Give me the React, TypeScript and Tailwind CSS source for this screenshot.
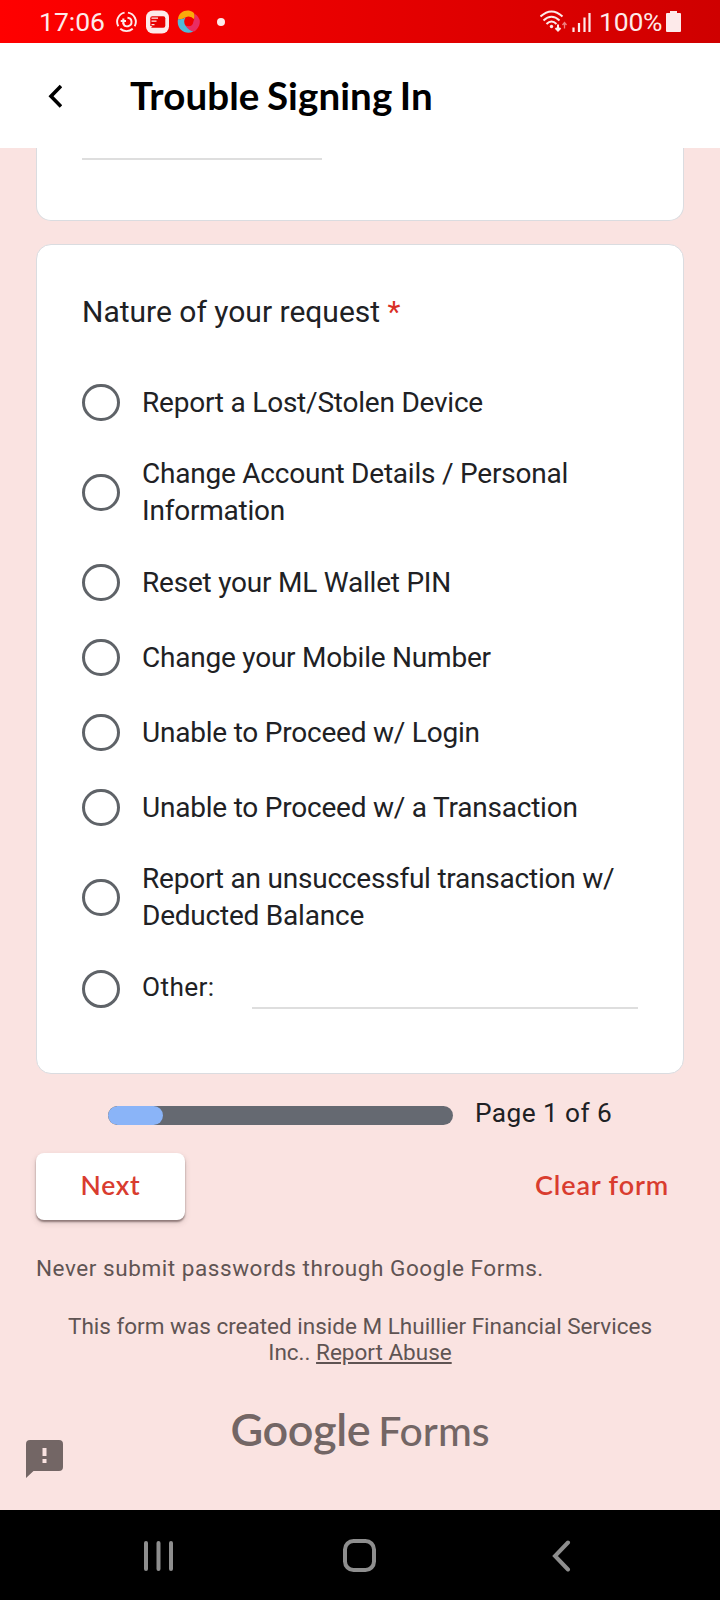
import React from 'react';

const options = [
  { label: 'Report a Lost/Stolen Device', box: 'h-[75px]' },
  { label: 'Change Account Details / Personal Information', box: 'h-[105px]', text: 'mb-[2px]' },
  { label: 'Reset your ML Wallet PIN', box: 'h-[75px]' },
  { label: 'Change your Mobile Number', box: 'h-[75px]' },
  { label: 'Unable to Proceed w/ Login', box: 'h-[75px]' },
  { label: 'Unable to Proceed w/ a Transaction', box: 'h-[75px]' },
  { label: 'Report an unsuccessful transaction w/ Deducted Balance', box: 'h-[105px]', text: 'mb-[2px]' },
];

function Radio() {
  return <span className="h-[37.5px] w-[38px] shrink-0 rounded-full border-[3px] border-[#5f6368]" />;
}

function StatusBar() {
  return (
    <div className="flex h-[43px] shrink-0 items-center bg-linear-to-r from-[#ff0000] to-[#cf0000] pl-[39px] pr-[39px] text-[26.5px] text-[#fdeaea]">
      <span className="w-[68px] whitespace-nowrap leading-[43px]">17:06</span>
      <svg className="ml-[8px] h-[24px] w-[23px]" viewBox="0 0 24 24" fill="none" stroke="#fdeaea" strokeWidth="2">
        <path d="M10 2.200A9.700 9.700 0 0 0 3.500 16.500" />
        <path d="M13.500 2.200A9.700 9.700 0 0 1 20.500 16.500" />
        <path d="M5.500 19A9.700 9.700 0 0 0 18.500 19" />
        <path d="M13 7.500A4.500 4.500 0 1 1 8.500 13.500" />
        <path d="M6 11H11.500M8.700 8.300V14" strokeWidth="2.200" />
      </svg>
      <svg className="ml-[8px] h-[24px] w-[23px]" viewBox="0 0 23 24">
        <rect y="0.500" width="23" height="23" rx="7" fill="#fdeaea" />
        <rect x="4.300" y="6.200" width="15" height="11.500" rx="2" fill="#e80000" />
        <path d="M5.500 8.200H12M5.500 11.200H10.500M5.500 14.700H8.500" stroke="#fdeaea" strokeWidth="1.300" />
        <path d="M4 18V16H6.500Z" fill="#fdeaea" />
      </svg>
      <svg className="ml-[8px] h-[24px] w-[23px]" viewBox="0 0 24 24">
        <path d="M1 9C2 2 8-1 14 .5Q20 2 18 9Q14 5 9 7Q5 10 1 9Z" fill="#fba90a" />
        <path d="M1 9Q6 10 9 7Q6 12 9 16Q13 20 17 22C9 26 -1 20 1 9Z" fill="#50b9d8" />
        <path d="M18 3Q26 8 23 16Q20 22 17 22Q12 21 9 16Q16 18 17 12Q19 7 18 3Z" fill="#e92d63" />
      </svg>
      <span className="ml-[17px] h-[8px] w-[8px] rounded-full bg-[#fdeaea]" />
      <svg className="ml-auto h-[24px] w-[28px]" viewBox="0 0 28 24" fill="none" stroke="#fdeaea" strokeWidth="2">
        <path d="M.500 6.500Q11.500-3.500 22.500 6.500" />
        <path d="M3.500 10.500Q11.500 3 19.500 10.500" />
        <path d="M6.500 14Q11.500 9 16.500 14" />
        <circle cx="11.500" cy="16.500" r="1.700" fill="#fdeaea" stroke="none" />
        <path d="M18 14.500V20M15.500 18L18 20.500L20.500 18" />
        <path d="M24.500 18.500V13M22.500 15L24.500 12.500L26.500 15" strokeWidth="1.300" opacity=".55" />
      </svg>
      <svg className="ml-[4px] h-[20px] w-[19px]" viewBox="0 0 19 20" stroke="#fdeaea" strokeWidth="2.200">
        <path d="M1.500 20V15.500M7 20V11M12.500 20V5.500M17.500 20V1" />
      </svg>
      <span className="ml-[8px] w-[67px] whitespace-nowrap leading-[43px] tracking-[-0.200px]">100%</span>
      <svg className="h-[21px] w-[15px]" viewBox="0 0 15 21" fill="#fdeaea">
        <path d="M4 0H11V2H14Q15 2 15 3V20Q15 21 14 21H1Q0 21 0 20V3Q0 2 1 2H4Z" />
      </svg>
    </div>
  );
}

export default function App() {
  return (
    <div className="flex h-[1600px] w-[720px] flex-col overflow-hidden bg-[#fae3e1] font-[Roboto,sans-serif] text-[#202124]">
      <StatusBar />
      <header className="flex h-[105px] shrink-0 items-center bg-white pl-[48px]">
        <svg className="h-[24px] w-[14px]" viewBox="0 0 14 24" fill="none" stroke="#000" strokeWidth="3.600">
          <path d="M13 2L3 12.300L13 22.500" />
        </svg>
        <h1 className="mb-[2px] ml-[68px] font-[Lato,sans-serif] text-[38.5px] font-bold leading-[48px] tracking-[0.1px] text-black [word-spacing:-2px]">
          Trouble Signing In
        </h1>
      </header>

      <main className="flex flex-1 flex-col px-[36px]">
        <section className="h-[73px] shrink-0 rounded-b-[15px] border border-t-0 border-[#dadce0] bg-white pl-[45px] pt-[10px]">
          <div className="h-[2px] w-[240px] bg-[#dedede]" />
        </section>

        <section className="mt-[23px] flex h-[830px] shrink-0 flex-col rounded-[15px] border border-[#dadce0] bg-white px-[45px] pt-[44px]">
          <h2 className="text-[30px] leading-[45px]">
            Nature of your request <span className="text-[#d93025]">*</span>
          </h2>
          <div className="mt-[31px] flex flex-col leading-[37px]">
            {options.map((option) => (
              <label key={option.label} className={`flex items-center ${option.box}`}>
                <Radio />
                <span className={`ml-[22px] w-[495px] text-[28px] tracking-[-0.22px] ${option.text ?? ''}`}>
                  {option.label}
                </span>
              </label>
            ))}
            <label className="flex h-[78px] items-center">
              <Radio />
              <span className="mb-[3px] ml-[22px] text-[26.25px] tracking-[0.375px]">Other:</span>
              <span className="ml-auto mt-[38px] h-[2px] w-[386px] bg-[#dedede]" />
            </label>
          </div>
        </section>

        <div className="mt-[20px] flex h-[38px] items-center pl-[72px]">
          <div className="mt-[5px] h-[19px] w-[345px] overflow-hidden rounded-full bg-[#656971]">
            <div className="h-full w-[55px] rounded-full bg-[#8ab4f8]" />
          </div>
          <span className="ml-[22px] text-[26.25px] leading-[38px] tracking-[0.42px]">Page 1 of 6</span>
        </div>

        <div className="mt-[21px] flex h-[67px] items-center justify-between">
          <button className="h-[67px] w-[149px] rounded-[8px] bg-white pb-[2px] font-[Lato,sans-serif] text-[26.5px] font-semibold tracking-[0.7px] text-[#d93c2f] shadow-[0_2px_2px_rgba(60,40,40,0.5),0_3px_6px_rgba(60,40,40,0.15)]">
            Next
          </button>
          <button className="pb-[2px] pr-[15px] font-[Lato,sans-serif] text-[27px] font-semibold tracking-[0.85px] text-[#d93c2f]">
            Clear form
          </button>
        </div>

        <p className="mt-[32px] text-[22.5px] leading-[32px] tracking-[0.56px] text-[#5f5453]">
          Never submit passwords through Google Forms.
        </p>
        <p className="mt-[29px] text-center text-[22.5px] leading-[26px] text-[#5f5453]">
          This form was created inside M Lhuillier Financial Services
          <br />
          Inc.. <span className="underline">Report Abuse</span>
        </p>

        <div className="mt-[36px] flex h-[56px] items-baseline justify-center whitespace-nowrap leading-[56px] text-[#736665]">
          <span className="font-[Lato,sans-serif] text-[45px] font-semibold tracking-[-0.4px]">Google</span>
          <span className="ml-[8px] font-[Lato,sans-serif] text-[41px] font-medium">Forms</span>
        </div>
        <svg className="-ml-[10px] -mt-[17px] h-[38px] w-[37px]" viewBox="0 0 37 38">
          <path d="M4 0H33Q37 0 37 4V27Q37 31 33 31H7.500L0 38V4Q0 0 4 0Z" fill="#736665" />
          <path d="M16.500 8H20.500V16H16.500ZM16.500 19H20.500V23H16.500Z" fill="#fae3e1" />
        </svg>
      </main>

      <nav className="flex h-[90px] shrink-0 items-center bg-black pl-[143px] pt-[2px]">
        <svg className="h-[32px] w-[31px]" viewBox="0 0 31 32" stroke="#8e8e8e" strokeWidth="4" strokeLinecap="round">
          <path d="M3 3V29M15.500 3V29M28 3V29" />
        </svg>
        <svg className="ml-[169px] h-[34px] w-[34px]" viewBox="0 0 34 34" fill="none" stroke="#8e8e8e" strokeWidth="4">
          <rect x="2" y="2" width="29" height="29" rx="8.500" />
        </svg>
        <svg className="ml-[174px] h-[32px] w-[20px]" viewBox="0 0 20 32" fill="none" stroke="#8e8e8e" strokeWidth="4" strokeLinecap="round">
          <path d="M17 2.500L4 16L17 29.500" />
        </svg>
      </nav>
    </div>
  );
}
